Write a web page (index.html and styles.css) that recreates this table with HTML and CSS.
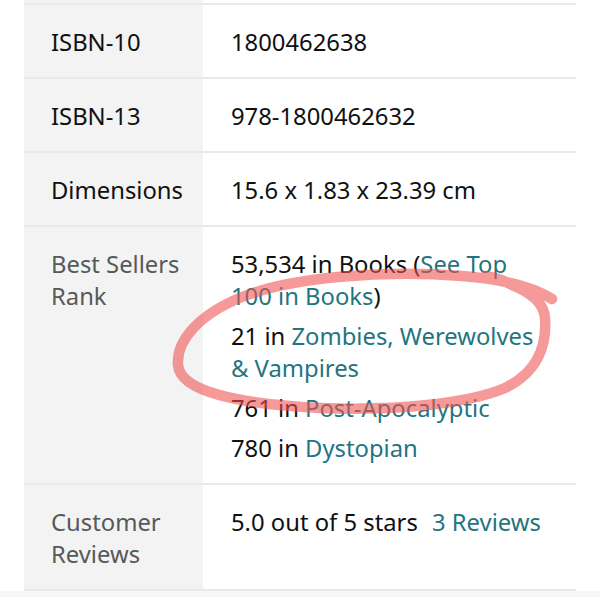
FILE: index.html
```html
<!DOCTYPE html>
<html lang="en">
<head>
    <title>Product details</title>
    <link rel="stylesheet" href="styles.css">
</head>
<body>
    <div class="page">
        <table class="details">
            <tr class="cut-row">
                <th></th>
                <td></td>
            </tr>
            <tr>
                <th>ISBN-10</th>
                <td>1800462638</td>
            </tr>
            <tr>
                <th>ISBN-13</th>
                <td>978-1800462632</td>
            </tr>
            <tr>
                <th>Dimensions</th>
                <td>15.6 x 1.83 x 23.39 cm</td>
            </tr>
            <tr>
                <th class="muted">Best Sellers Rank</th>
                <td>
                    <ul class="ranks">
                        <li>53,534 in Books (<a href="#">See Top 100 in Books</a>)</li>
                        <li>21 in <a href="#">Zombies, Werewolves &amp; Vampires</a></li>
                        <li>761 in <a href="#">Post-Apocalyptic</a></li>
                        <li>780 in <a href="#">Dystopian</a></li>
                    </ul>
                </td>
            </tr>
            <tr>
                <th class="muted">Customer Reviews</th>
                <td>5.0 out of 5 stars <a href="#" class="reviews">3 Reviews</a></td>
            </tr>
        </table>
        <div class="page-end"></div>

        <!-- hand-drawn marker ring over the rank list -->
        <svg class="scribble" width="600" height="597" viewBox="0 0 600 597">
            <path d="M 552 299 C 532 286, 502 279, 462 276 C 382 270, 292 277, 242 297 C 200 314, 176 340, 178 365 C 180 392, 240 404, 320 408 C 400 411, 470 403, 505 388 C 538 372, 547 345, 545 318 C 544 305, 535 294, 512 285 C 505 281, 495 277, 485 276" />
        </svg>
    </div>
</body>
</html>
```

FILE: styles.css
```css
body {
    margin: 0;
    background-color: #ffffff;
    font-family: "Noto Sans", "Open Sans", sans-serif;
    font-size: 23.8px;
    line-height: 32px;
    color: #0f1111;
}
.page {
    position: relative;
    width: 600px;
    height: 597px;
    overflow: hidden;
}
.details {
    margin-left: 24px;
    width: 552px;
    border-collapse: collapse;
}
.details th, .details td {
    padding: 21px 34px 19px 28px;
    border-bottom: 2px solid #e9e9e9;
    text-align: left;
    vertical-align: top;
}
.details th {
    width: 179px;
    box-sizing: border-box;
    padding-left: 27px;
    padding-right: 10px;
    background-color: #f3f3f3;
    font-weight: normal;
}
.details .cut-row th, .details .cut-row td {
    height: 4px;
    padding: 0;
    box-sizing: border-box;
}
.muted {
    color: #565959;
}
a {
    color: #1f7580;
    text-decoration: none;
}
.ranks {
    list-style: none;
    margin: 0;
    padding: 0;
}
.ranks li + li {
    margin-top: 8px;
}
.reviews {
    margin-left: 8px;
}
.page-end {
    height: 20px;
    background: linear-gradient(#f8f8f9, #eff1f3);
}
.scribble {
    position: absolute;
    top: 0;
    left: 0;
    pointer-events: none;
}
.scribble path {
    fill: none;
    stroke: rgba(240, 80, 80, 0.58);
    stroke-width: 10.5;
    stroke-linecap: round;
    stroke-linejoin: round;
}
```
